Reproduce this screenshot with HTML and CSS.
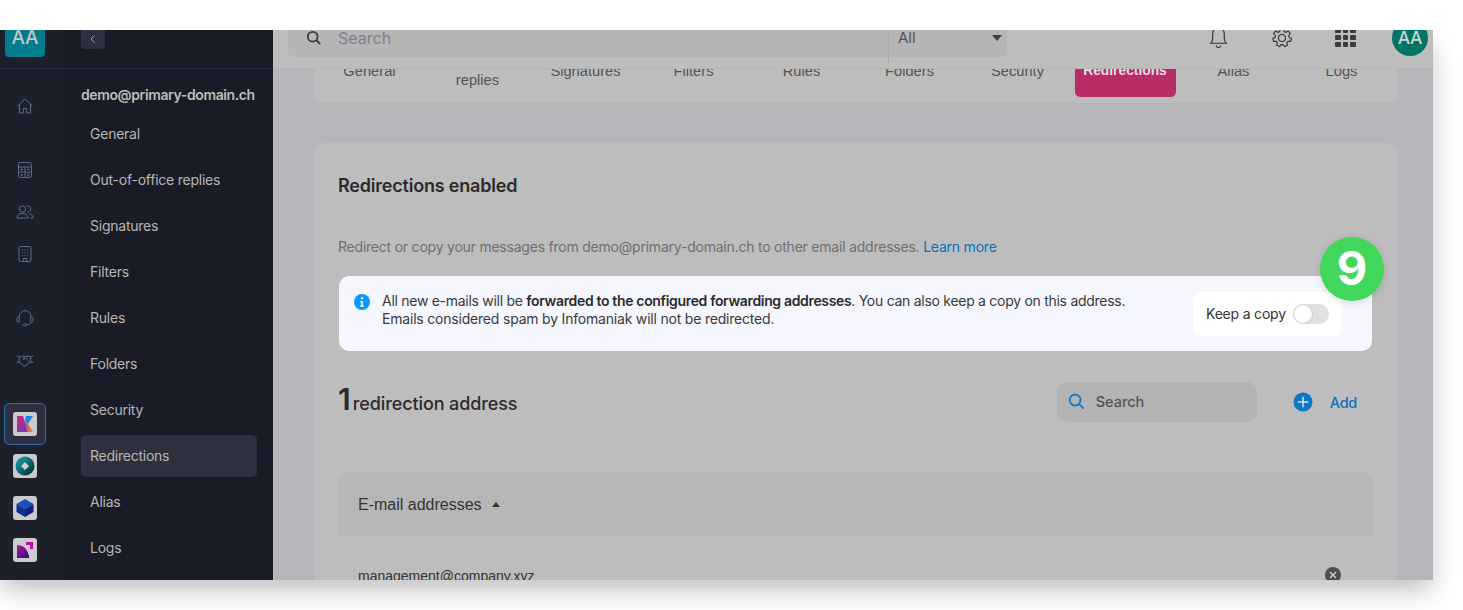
FILE: index.html
```html
<!DOCTYPE html>
<html lang="en">
<head>
<meta charset="utf-8">
<title>Redirections</title>
<link rel="stylesheet" href="styles.css">
</head>
<body>
<div class="window">
  <nav class="rail">
    <div class="rail-top"><div class="org">AA</div></div>
    <div class="rail-group first">
      <div class="rail-item"><svg class="ri" viewBox="0 0 18 18"><path d="M1.500 9 9 1.800 16.500 9M3.500 7.500V16h3.800v-4.500h3.400V16h3.800V7.500"/></svg></div>
    </div>
    <div class="rail-group">
      <div class="rail-item"><svg class="ri" viewBox="0 0 18 18"><rect x="2.500" y="1.500" width="13" height="15" rx="2"/><path d="M2.500 6h13M9 6v10.500M2.500 11h13M4.500 8.500h2.500M5.700 7.400v2.200M11 8.500h2.500M4.700 12.800l2 2M6.700 12.800l-2 2M11 13h2.500M11 14.800h2.500M12.500 3.800h1"/></svg></div>
      <div class="rail-item"><svg class="ri" viewBox="0 0 18 18"><circle cx="6.500" cy="6" r="3.200"/><path d="M1 15c0-3 2.400-4.600 5.500-4.600S12 12 12 15zM10.500 3a3.200 3.200 0 1 1 .8 6.200M13.200 10.600c2.200.4 3.800 2 3.800 4.400h-3"/></svg></div>
      <div class="rail-item"><svg class="ri" viewBox="0 0 18 18"><rect x="3" y="1.500" width="12" height="15" rx="1.500"/><path d="M7.300 16.500v-3h3.400v3M6 5h1M8.500 5h1M11 5h1M6 7.800h1M8.500 7.800h1M11 7.800h1M6 10.600h1M8.500 10.600h1M11 10.600h1"/></svg></div>
    </div>
    <div class="rail-group">
      <div class="rail-item"><svg class="ri" viewBox="0 0 18 18"><path d="M3.200 9V7.500a5.800 5.800 0 0 1 11.600 0V9M14.800 13c0 2-1.800 2.800-4 2.800"/><rect x="1" y="8" width="2.400" height="5" rx="1.200"/><rect x="14.600" y="8" width="2.400" height="5" rx="1.200"/><rect x="7.200" y="14.800" width="3.600" height="2" rx="1"/></svg></div>
      <div class="rail-item"><svg class="ri" viewBox="0 0 18 18"><path d="M.8 5.200l2.600.8 2.600-1 3 .6 3-.6 2.600 1 2.600-.8M3.400 6 3 11M14.600 6l.4 5M.8 11.500 3 11l3 2.600 2.200 1.600c.8.500 1.400-.2 1.200-.8.800.500 1.400-.2 1.200-.9.900.3 1.300-.5 1-1.100L15 11l2.200.5M9 5.600 6.800 7.400c-.5.700.5 1.300 1.200.9L10 7.200l3 3.500"/></svg></div>
    </div>
    <div class="rail-group">
      <div class="rail-item current"><span class="logo"><svg viewBox="0 0 24 24"><defs><linearGradient id="k1" x1="0" y1="0" x2="1" y2="1"><stop offset="0" stop-color="#d4227f"/><stop offset="1" stop-color="#5b3fc0"/></linearGradient><linearGradient id="k2" x1="0" y1="0" x2="1" y2="1"><stop offset="0" stop-color="#d7415f"/><stop offset="1" stop-color="#e08a3a"/></linearGradient></defs><path fill="url(#k1)" d="M4 4h6l5 16H4z"/><path fill="#1687dc" d="M13 4h7l-5 8-3-3z"/><path fill="url(#k2)" d="M11.500 9.500 15 12l5 8h-5z"/></svg></span></div>
      <div class="rail-item"><span class="logo"><svg viewBox="0 0 24 24"><defs><linearGradient id="d1" x1="0" y1="0" x2="1" y2="1"><stop offset="0" stop-color="#14aab4"/><stop offset="1" stop-color="#06262e"/></linearGradient></defs><circle cx="12" cy="12" r="9.500" fill="url(#d1)"/><path fill="#d0d0d0" d="M12 8l4 4-4 4-4-4z"/></svg></span></div>
      <div class="rail-item"><span class="logo"><svg viewBox="0 0 24 24"><path fill="#1a4fc0" d="M12 3l8.500 5L12 13 3.500 8z"/><path fill="#0f2e96" d="M3.500 8 12 13v8l-8.500-5z"/><path fill="#0b2378" d="M20.500 8 12 13v8l8.500-5z"/></svg></span></div>
      <div class="rail-item"><span class="logo"><svg viewBox="0 0 24 24"><defs><linearGradient id="s1" x1="0" y1="0" x2="1" y2="1"><stop offset="0" stop-color="#b0149e"/><stop offset="1" stop-color="#2a0c7e"/></linearGradient></defs><path fill="#c010a8" d="M13 4h7v7h-3V7h-4z"/><path fill="url(#s1)" d="M4 7c3 0 6 1 8 3s3 5 4 8v2H4z"/></svg></span></div>
    </div>
  </nav>

  <aside class="side">
    <div class="side-top"><button class="back"><svg viewBox="0 0 12 12"><path d="M7.500 2.500 4 6l3.500 3.500"/></svg></button></div>
    <div class="side-title">demo@primary-domain.ch</div>
    <ul class="side-list">
      <li>General</li>
      <li>Out-of-office replies</li>
      <li>Signatures</li>
      <li>Filters</li>
      <li>Rules</li>
      <li>Folders</li>
      <li>Security</li>
      <li class="on">Redirections</li>
      <li>Alias</li>
      <li>Logs</li>
    </ul>
  </aside>

  <main class="main">
    <header class="top">
      <div class="search-bar">
        <svg class="sb-icon" viewBox="0 0 18 18"><circle cx="7.500" cy="7.500" r="5.500"/><path d="m11.500 11.500 4.500 4.500"/></svg>
        <span class="sb-text">Search</span>
        <span class="sb-select">All<i class="caret-down"></i></span>
      </div>
      <div class="top-icons">
        <svg class="ti bell" viewBox="0 0 20 22"><path d="M2.500 17.500h15c-1.500-1.500-2-2.500-2-5V8a5.500 5.500 0 0 0-11 0v4.500c0 2.500-.5 3.500-2 5zM8 19.500a2 2 0 0 0 4 0"/></svg>
        <svg class="ti gear" viewBox="0 0 22 22"><path d="M9.300 2h3.400l.5 2.500 1.700.8 2.300-1.200 2 2.400-1.500 2.100.4 1.800 2.300 1-.7 3-2.600-.1-1.200 1.500.6 2.500-2.900 1.300-1.600-2h-1.800l-1.600 2-2.900-1.300.6-2.500-1.200-1.500-2.600.1-.7-3 2.300-1 .4-1.800L2.600 6.500l2-2.400 2.300 1.200 1.700-.8z"/><circle cx="11" cy="11" r="3.500"/></svg>
        <div class="grid-icon"><i></i><i></i><i></i><i></i><i></i><i></i><i></i><i></i><i></i></div>
        <div class="avatar">AA</div>
      </div>
    </header>

    <div class="scroll">
      <div class="tabs">
        <div class="tab-row">
          <div class="tab">General</div>
          <div class="tab">Out-of-office replies</div>
          <div class="tab">Signatures</div>
          <div class="tab">Filters</div>
          <div class="tab">Rules</div>
          <div class="tab">Folders</div>
          <div class="tab">Security</div>
          <div class="tab active">Redirections</div>
          <div class="tab">Alias</div>
          <div class="tab">Logs</div>
        </div>
      </div>

      <section class="card">
        <h2 class="card-title">Redirections enabled</h2>
        <p class="card-desc">Redirect or copy your messages from demo@primary-domain.ch to other email addresses. <a class="link">Learn more</a></p>
        <div class="alert-wrap">
          <div class="alert">
            <svg class="info" viewBox="0 0 16 16"><circle cx="8" cy="8" r="8" fill="#0a98ff"/><circle cx="8" cy="4.300" r="1.200" fill="#fff"/><path d="M6.300 7h2.500v4.500h1.200v1.200H6v-1.200h1.300V8.200h-1z" fill="#fff"/></svg>
            <p class="alert-text">All new e-mails will be <b>forwarded to the configured forwarding addresses</b>. You can also keep a copy on this address.<br><span class="alert-second">Emails considered spam by Infomaniak will not be redirected.</span></p>
            <div class="keep"><span>Keep a copy</span><span class="toggle"><i></i></span></div>
          </div>
          <div class="badge">9</div>
        </div>

        <div class="list-head">
          <div class="count"><b>1</b> <span>redirection address</span></div>
          <div class="list-actions">
            <div class="mini-search">
              <svg viewBox="0 0 18 18"><circle cx="7.500" cy="7.500" r="5.800"/><path d="m11.800 11.800 4.700 4.700"/></svg>
              <span>Search</span>
            </div>
            <div class="add">
              <svg viewBox="0 0 20 20"><circle cx="10" cy="10" r="9.500" fill="#0a78c8"/><path d="M10 4.800v10.400M4.800 10h10.400" stroke="#ddd" stroke-width="1.600"/></svg>
              <span>Add</span>
            </div>
          </div>
        </div>

        <div class="thead">E-mail addresses<i class="caret-up"></i></div>
        <div class="trow">
          <span>management@company.xyz</span>
          <svg class="del" viewBox="0 0 16 16"><circle cx="8" cy="8" r="8" fill="#4d4d4d"/><path d="m5 5 6 6M11 5l-6 6" stroke="#ccc" stroke-width="1.500"/></svg>
        </div>
      </section>
    </div>
  </main>
</div>
</body>
</html>
```

FILE: styles.css
```css
* { box-sizing: border-box; }
html, body { margin: 0; height: 100%; }
body {
  background: #fff;
  overflow: hidden;
  padding-top: 30px;
  font-family: Inter, "Liberation Sans", sans-serif;
  font-size: 14px;
  color: #333;
}
.window {
  width: 1433px;
  height: 550px;
  display: flex;
  overflow: hidden;
  background: #b5b5ba;
  box-shadow: 0 12px 24px -2px rgba(0, 0, 0, .25);
  clip-path: inset(0 -50px -50px 0);
}
/* rail */
.rail { width: 65px; flex: none; background: #1b202b; }
.rail-top {
  height: 39px;
  border-bottom: 1px solid #2b2e3c;
  padding-left: 5px;
}
.org {
  width: 40px;
  height: 27px;
  background: #007d8c;
  border-radius: 0 0 4px 4px;
  color: #c6c6c6;
  font-size: 19px;
  font-weight: 500;
  line-height: 16px;
  text-align: center;
}
.rail-group { margin-top: 22px; }
.rail-group.first { margin-top: 16px; }
.rail-item {
  width: 42px;
  height: 42px;
  margin-left: 4px;
  display: flex;
  align-items: center;
  justify-content: center;
  border-radius: 5px;
}
.rail-item.current { background: #2e3040; border: 1px solid #2c6ea6; }
.ri { width: 18px; height: 18px; fill: none; stroke: #5a6f85; stroke-width: 1; }
.logo {
  width: 24px;
  height: 24px;
  background: #cbcbcb;
  border-radius: 3px;
  display: block;
}
.logo svg { display: block; width: 24px; height: 24px; }
/* sidebar */
.side { width: 208px; flex: none; background: #191c27; }
.side-top {
  height: 39px;
  border-bottom: 1px solid #2b2e3c;
  padding-left: 16px;
}
.back {
  display: block;
  width: 24px;
  height: 19px;
  padding: 0 0 2px;
  background: #2e3040;
  border: 0;
  border-radius: 0 0 4px 4px;
}
.back svg { display: block; width: 12px; height: 12px; margin: 0 auto; fill: none; stroke: #a9a9a9; stroke-width: 1; }
.side-title {
  margin: 16px 0 8px 16px;
  font-size: 14px;
  letter-spacing: -.38px;
  line-height: 20px;
  font-weight: 600;
  color: #bdbdbd;
  white-space: nowrap;
}
.side-list { list-style: none; margin: 0 16px; padding: 0; }
.side-list li {
  height: 42px;
  margin-bottom: 4px;
  padding-left: 9px;
  line-height: 41px;
  border-radius: 5px;
  font-size: 14px;
  letter-spacing: -.24px;
  color: #b6b6b6;
}
.side-list li.on { background: #2e3040; }
/* main */
.main { flex: 1; min-width: 0; display: flex; flex-direction: column; }
.top {
  height: 39px;
  flex: none;
  display: flex;
  background: #bdbdbd;
  border-bottom: 1px solid #b5b5b5;
  padding-left: 15px;
}
.search-bar {
  width: 719px;
  height: 27px;
  display: flex;
  align-items: center;
  background: #b5b5b5;
  border-radius: 0 0 6px 6px;
  padding: 0 5px 11px 18px;
}
.sb-icon { width: 16px; height: 16px; fill: none; stroke: #3a3a3a; stroke-width: 2; flex: none; }
.sb-text { margin-left: 16px; font-size: 16px; color: #7c828f; flex: 1; }
.sb-select {
  width: 119px;
  height: 38px;
  margin: 0 -5px -11px 0;
  padding: 0 5px 12px 9px;
  display: flex;
  align-items: center;
  justify-content: space-between;
  border-left: 1px solid #aaa;
  font-size: 15px;
  color: #555;
}
.caret-down { width: 0; height: 0; border: 5px solid transparent; border-top: 6px solid #444; border-bottom: 0; }
.top-icons { display: flex; align-items: center; margin-left: 201px; height: 15px; }
.ti { width: 21px; height: 23px; fill: none; stroke: #333; stroke-width: 1.100; flex: none; }
.ti.bell { margin-top: -2px; }
.ti.gear { width: 22px; height: 22px; margin-left: 42px; }
.grid-icon {
  margin-left: 42px;
  width: 21px;
  height: 19px;
  flex: none;
  display: grid;
  grid-template-columns: repeat(3, 1fr);
  gap: 2px;
}
.grid-icon i { background: #3d3d3d; border-radius: 1px; }
.avatar {
  width: 36px;
  height: 36px;
  margin: 0 0 0 36px;
  border-radius: 50%;
  background: #007566;
  color: #c9d6d3;
  font-size: 17.500px;
  font-weight: 500;
  letter-spacing: -.2px;
  line-height: 36px;
  text-align: center;
  flex: none;
}
.scroll { flex: 1; min-height: 0; overflow: hidden; padding: 0 36px 0 41px; }
.tabs {
  height: 34px;
  background: #bdbdbd;
  border-radius: 0 0 6px 6px;
  overflow: hidden;
  display: flex;
  justify-content: center;
}
.tab-row {
  display: grid;
  grid-template-columns: repeat(10, 108px);
  height: 52px;
  margin-top: -24px;
  font-family: "Liberation Sans", Arial, sans-serif;
}
.tab {
  display: flex;
  align-items: center;
  justify-content: center;
  text-align: center;
  padding: 0 6px;
  font-size: 14.700px;
  line-height: 18px;
  color: #555;
  border-radius: 5px;
}
.tab.active {
  background: #b92c66;
  color: #e6dfe2;
  font-weight: 700;
  font-size: 13.800px;
  margin: 0 4px 0 3px;
  padding: 0;
}
.card {
  margin-top: 40px;
  background: #bdbdbd;
  border-radius: 10px 10px 0 0;
  padding: 31px 24px 0;
  height: 500px;
}
.card-title {
  margin: 0;
  font-size: 18px;
  letter-spacing: -.2px;
  line-height: 24px;
  font-weight: 600;
  color: #2b2b2b;
}
.card-desc {
  margin: 40px 0 0;
  font-size: 14px;
  letter-spacing: -.22px;
  line-height: 18px;
  color: #6f6f6f;
}
.link { color: #0a71bd; }
.alert-wrap { position: relative; margin: 20px 1px 0; }
.alert {
  height: 75px;
  display: flex;
  align-items: flex-start;
  background: #f5f6fe;
  border-radius: 10px;
  padding: 16px 31px 0 15px;
}
.info { width: 16px; height: 16px; flex: none; margin-top: 2px; }
.alert-text {
  flex: 1;
  margin: 0 0 0 12px;
  font-size: 14px;
  letter-spacing: -.28px;
  line-height: 18px;
  color: #3a3a3a;
}
.alert-text b { font-weight: 600; letter-spacing: -.34px; color: #2b2b2b; }
.alert-second { letter-spacing: -.2px; }
.keep {
  width: 148px;
  height: 44px;
  background: #fff;
  border-radius: 8px;
  display: flex;
  align-items: center;
  padding: 0 12px 2px 13px;
  justify-content: space-between;
  font-size: 14px;
  letter-spacing: -.2px;
  color: #333;
}
.toggle {
  width: 36px;
  height: 20px;
  margin-top: 2px;
  background: #e0e0e0;
  border-radius: 10px;
  padding: 1px;
  display: block;
}
.toggle i { display: block; width: 18px; height: 18px; background: #fff; border-radius: 50%; box-shadow: 0 0 2px rgba(0,0,0,.25); }
.badge {
  position: absolute;
  right: -12px;
  top: -39px;
  width: 64px;
  height: 64px;
  border-radius: 50%;
  background: #41d75a;
  color: #fff;
  font-size: 47px;
  font-weight: 700;
  line-height: 62px;
  text-align: center;
  box-shadow: 0 2px 8px rgba(0,0,0,.12);
}
.list-head {
  margin-top: 31px;
  height: 40px;
  display: flex;
  align-items: center;
  justify-content: space-between;
}
.count { display: flex; align-items: baseline; gap: 2px; color: #2b2b2b; margin-top: -6px; }
.count b { font-size: 30px; font-weight: 600; }
.count span { font-size: 18px; letter-spacing: -.1px; font-weight: 500; }
.list-actions { display: flex; align-items: center; }
.mini-search {
  width: 200px;
  height: 40px;
  background: #b3b3b3;
  border-radius: 10px;
  display: flex;
  align-items: center;
  padding: 0 0 1px 11px;
  font-weight: 500;
  font-size: 14.500px;
  letter-spacing: -.05px;
  color: #555;
}
.mini-search svg { width: 17px; height: 17px; fill: none; stroke: #0a78c8; stroke-width: 1.800; margin-right: 11px; }
.add {
  display: flex;
  align-items: center;
  margin: 0 16px 0 36px;
  color: #0a71bd;
  font-weight: 500;
  font-size: 14.500px;
  letter-spacing: -.3px;
}
.add svg { width: 20px; height: 20px; margin-right: 17px; }
.thead {
  margin-top: 50px;
  height: 64px;
  display: flex;
  align-items: center;
  padding: 1px 0 0 20px;
  background: #b6b6b6;
  border-radius: 10px 10px 0 0;
  font-family: "Liberation Sans", Arial, sans-serif;
  font-size: 16px;
  color: #333;
}
.caret-up { margin-left: 10px; width: 0; height: 0; border: 4.500px solid transparent; border-bottom: 5px solid #333; border-top: 0; }
.trow {
  height: 80px;
  display: flex;
  align-items: center;
  justify-content: space-between;
  padding: 0 32px 0 20px;
  font-family: "Liberation Sans", Arial, sans-serif;
  font-size: 14px;
  color: #333;
}
.del { width: 16px; height: 16px; margin-top: -2px; }
```
